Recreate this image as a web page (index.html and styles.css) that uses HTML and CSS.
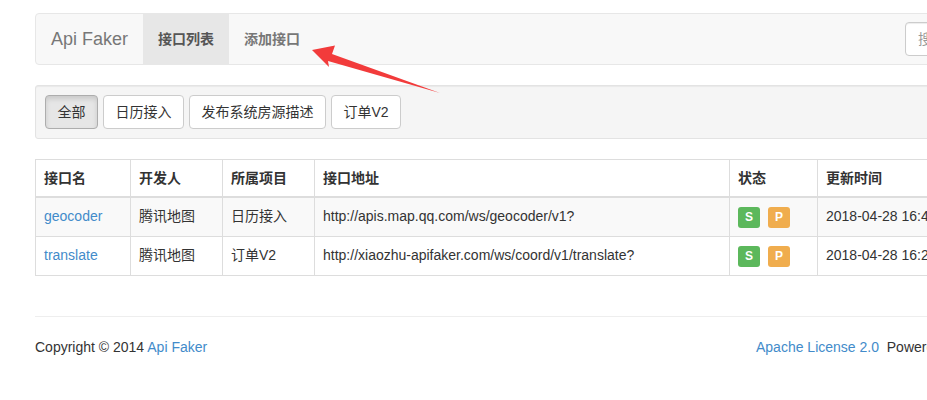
FILE: index.html
```html
<!DOCTYPE html>
<html lang="zh-CN">
<head>
<meta charset="utf-8">
<title>Api Faker</title>
<link rel="stylesheet" href="styles.css">
</head>
<body>
<div class="container">
  <nav class="navbar">
    <a class="brand" href="#">Api Faker</a>
    <ul class="nav">
      <li class="active"><a href="#">接口列表</a></li>
      <li><a href="#">添加接口</a></li>
    </ul>
    <form class="search">
      <input class="search-input" type="text" placeholder="搜索接口">
    </form>
  </nav>

  <div class="well">
    <button class="btn active" type="button">全部</button>
    <button class="btn" type="button">日历接入</button>
    <button class="btn" type="button">发布系统房源描述</button>
    <button class="btn" type="button">订单V2</button>
  </div>

  <table class="table">
    <colgroup>
      <col class="c-name"><col class="c-dev"><col class="c-proj"><col class="c-url"><col class="c-state"><col class="c-time">
    </colgroup>
    <thead>
      <tr><th>接口名</th><th>开发人</th><th>所属项目</th><th>接口地址</th><th>状态</th><th>更新时间</th></tr>
    </thead>
    <tbody>
      <tr class="striped">
        <td><a href="#">geocoder</a></td>
        <td>腾讯地图</td>
        <td>日历接入</td>
        <td>http://apis.map.qq.com/ws/geocoder/v1?</td>
        <td><span class="tag tag-s">S</span><span class="tag tag-p">P</span></td>
        <td>2018-04-28 16:45:12</td>
      </tr>
      <tr>
        <td><a href="#">translate</a></td>
        <td>腾讯地图</td>
        <td>订单V2</td>
        <td>http://xiaozhu-apifaker.com/ws/coord/v1/translate?</td>
        <td><span class="tag tag-s">S</span><span class="tag tag-p">P</span></td>
        <td>2018-04-28 16:23:08</td>
      </tr>
    </tbody>
  </table>

  <hr class="rule">
  <footer class="footer">
    <p>Copyright © 2014 <a href="#">Api Faker</a></p>
    <p class="footer-right"><a href="#">Apache License 2.0</a>&nbsp; Powered by Bootstrap</p>
  </footer>
</div>

<svg class="arrow" width="140" height="60" viewBox="300 40 140 60" xmlns="http://www.w3.org/2000/svg">
  <polygon points="312,50 335,45.5 332,54 440,93 328,61 329,67" fill="#f23b3b"/>
</svg>
</body>
</html>
```

FILE: styles.css
```css
html, body {
  margin: 0;
  padding: 0;
  overflow: hidden;
  background: #fff;
}
body {
  font-family: "Liberation Sans", Arial, "Noto Sans CJK SC", sans-serif;
  font-size: 14px;
  line-height: 20px;
  color: #333;
  position: relative;
}
a { color: #428bca; text-decoration: none; }

.container {
  width: 1140px;
  margin-left: 35px;
  padding-top: 13px;
}

/* navbar */
.navbar {
  display: flex;
  align-items: stretch;
  height: 50px;
  background: #f8f8f8;
  border: 1px solid #e7e7e7;
  border-radius: 4px;
  margin-bottom: 20px;
}
.brand {
  padding: 15px 15px;
  font-size: 18px;
  line-height: 20px;
  color: #777;
}
.nav {
  display: flex;
  list-style: none;
  margin: 0;
  padding: 0;
}
.nav a {
  display: block;
  padding: 15px 15px;
  color: #777;
  font-weight: bold;
  line-height: 20px;
}
.nav .active a {
  background: #e7e7e7;
  color: #555;
}
.search {
  margin: 8px 0 0 auto;
  padding-right: 15px;
}
.search-input {
  box-sizing: border-box;
  width: 254px;
  height: 34px;
  padding: 6px 12px;
  border: 1px solid #ccc;
  border-radius: 4px;
  font: inherit;
  box-shadow: inset 0 1px 1px rgba(0,0,0,.075);
}
.search-input::placeholder { color: #999; }

/* well */
.well {
  display: flex;
  gap: 5px;
  padding: 9px;
  background: #f5f5f5;
  border: 1px solid #e3e3e3;
  border-radius: 3px;
  box-shadow: inset 0 1px 1px rgba(0,0,0,.05);
  margin-bottom: 20px;
}
.btn {
  font: inherit;
  line-height: 20px;
  padding: 6px 11.5px;
  color: #333;
  background: #fff;
  border: 1px solid #ccc;
  border-radius: 4px;
  cursor: pointer;
}
.btn.active {
  background: #e6e6e6;
  border-color: #adadad;
  box-shadow: inset 0 3px 5px rgba(0,0,0,.125);
}

/* table */
.table {
  width: 100%;
  table-layout: fixed;
  border-collapse: collapse;
  border-spacing: 0;
  margin-bottom: 40px;
}
.c-name { width: 95px; }
.c-dev { width: 92px; }
.c-proj { width: 92px; }
.c-url { width: 415px; }
.c-state { width: 88px; }
.table th, .table td {
  padding: 8px;
  border: 1px solid #ddd;
  text-align: left;
  vertical-align: top;
  line-height: 20px;
  white-space: nowrap;
  overflow: hidden;
}
.table th {
  font-weight: bold;
  border-bottom-width: 2px;
}
.striped td { background: #f9f9f9; }

.tag {
  display: inline-block;
  box-sizing: border-box;
  height: 21px;
  margin-top: 1px;
  padding: 1px 7px;
  margin-right: 8px;
  font-size: 12px;
  line-height: 19px;
  font-weight: bold;
  color: #fff;
  border-radius: 3px;
  vertical-align: top;
}
.tag-s { background: #5cb85c; }
.tag-p { background: #f0ad4e; }

/* footer */
.rule {
  margin: 0 0 20px;
  border: 0;
  border-top: 1px solid #eee;
}
.footer {
  display: flex;
  justify-content: space-between;
}
.footer p { margin: 0 0 10px; }
.footer-right { width: 419px; }

.arrow {
  position: absolute;
  left: 300px;
  top: 40px;
}
```
